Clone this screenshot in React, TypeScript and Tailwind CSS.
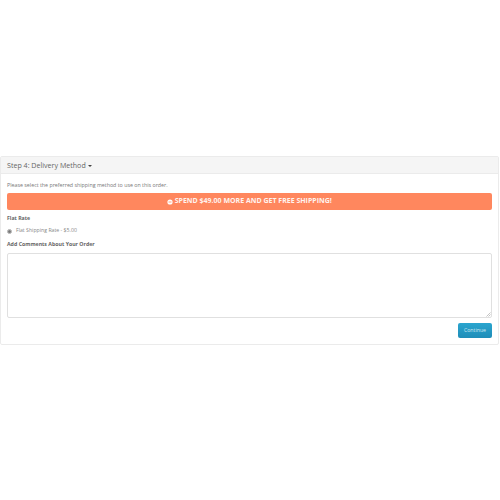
export default function App() {
  return (
    <div className="min-h-[500px] bg-white pt-[156px] font-['Open_Sans',sans-serif] text-[#555]">
      <div className="mr-px h-[189px] rounded-[2px] border border-[#ebebeb] bg-white">
        <div className="flex h-[17px] items-center border-b border-[#ebebeb] bg-[#f5f5f5] pl-[6px] text-[7.1px] text-[#666]">
          Step 4: Delivery Method
          <span className="ml-[2px] mt-px border-x-[2.5px] border-t-[2.5px] border-x-transparent border-t-[#444]" />
        </div>
        <div className="flex flex-col px-[6px]">
          <p className="mt-[7px] text-[5.3px] leading-[8px] text-[#777]">
            Please select the preferred shipping method to use on this order.
          </p>
          <div className="mt-[4px] flex h-[17px] items-center justify-center rounded-[2px] bg-[#ff875e] text-[7px] font-bold text-[#fff3ee]">
            <svg className="mr-[1.5px]" width="6" height="6" viewBox="0 0 6 6">
              <circle cx="3" cy="3" r="2.6" fill="#fff" />
              <rect x="1.5" y="2.6" width="3" height="0.8" fill="#ff875e" />
            </svg>
            SPEND $49.00 MORE AND GET FREE SHIPPING!
          </div>
          <p className="mt-[4px] text-[5.2px] font-bold leading-[8px] text-[#666]">Flat Rate</p>
          <div className="mt-[5px] flex h-[8px] items-center text-[5.2px] text-[#888]">
            <span className="flex size-[5px] items-center justify-center rounded-full border-[0.5px] border-[#aaa] bg-white">
              <span className="size-[3px] rounded-full bg-[#777]" />
            </span>
            <span className="ml-[4px]">Flat Shipping Rate - $5.00</span>
          </div>
          <p className="mt-[5px] text-[5.25px] font-bold leading-[8px] text-[#666]">Add Comments About Your Order</p>
          <div className="relative mt-[5px] h-[65px]">
            <textarea
              readOnly
              className="block h-full w-full resize-none rounded-[2px] border border-[#e0e0e0] bg-white"
            />
            <svg className="absolute bottom-[1px] right-[1px]" width="5" height="5" viewBox="0 0 5 5">
              <path d="M0.5 4.5 L4.5 0.5 M2.5 4.5 L4.5 2.5" stroke="#aaa" strokeWidth="0.7" />
            </svg>
          </div>
          <div className="mt-[5px] flex justify-end">
            <button className="flex h-[15px] w-[34px] items-center justify-center rounded-[2px] bg-gradient-to-b from-[#2aa5cf] to-[#1f8db8] text-[5.2px] text-[#cfe8f2]">
              Continue
            </button>
          </div>
        </div>
      </div>
    </div>
  );
}
